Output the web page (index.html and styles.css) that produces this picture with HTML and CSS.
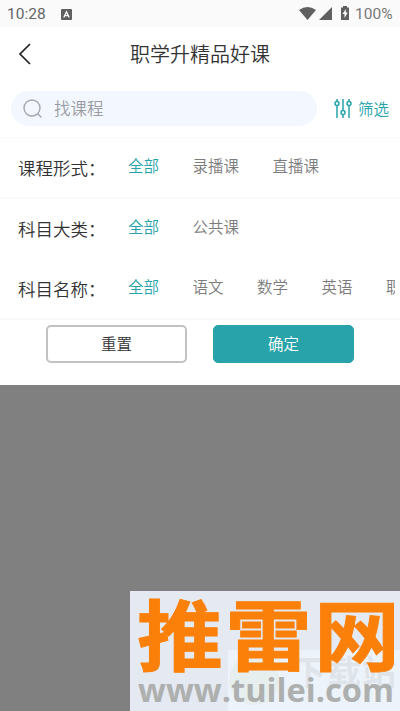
FILE: index.html
```html
<!DOCTYPE html>
<html lang="zh-CN">
<head>
<meta charset="utf-8">
<title>职学升精品好课</title>
<link rel="stylesheet" href="styles.css">
</head>
<body>
<div class="screen">
  <div class="status">
    <span class="time">10:28</span>
    <svg class="ime" width="11" height="11" viewBox="0 0 11 11"><rect width="11" height="11" rx="1" fill="#606060"/><path d="M2.8 8.5 5.5 2.7 8.2 8.5M3.9 6.6h3.2" fill="none" stroke="#fff" stroke-width="1.3"/></svg>
    <svg class="signals" width="51" height="16" viewBox="0 0 51 16"><path d="M0 4Q8.500-2 17 4L8.500 14Z" fill="#606060"/><path d="M20 14 33 1V14Z" fill="#606060"/><path d="M44 1.500V0h4v1.500h2v12.500h-8V1.500Z" fill="#606060"/><path d="M46.800 3 43.500 8h2v4l3.200-5.500h-2Z" fill="#fff"/></svg>
    <span class="battery">100%</span>
  </div>
  <header class="header">
    <svg class="back" width="14" height="22" viewBox="0 0 14 22"><path d="M12 1 2 11 12 21" fill="none" stroke="#222" stroke-width="1.7"/></svg>
    <h1 class="title">职学升精品好课</h1>
  </header>
  <div class="searchbar">
    <div class="search">
      <svg width="20" height="20" viewBox="0 0 20 20" fill="none" stroke="#a5a8ae" stroke-width="1.4"><circle cx="9" cy="9" r="8"/><path d="m14.500 14.500 4 4"/></svg>
      <span class="caption">找课程</span>
    </div>
    <div class="filter">
      <svg width="18" height="19" viewBox="0 0 18 19" fill="none" stroke="#27a3a9" stroke-width="1.5"><path d="M3 0v2.500M3 6.500V19M9 0v11.500M9 15.500V19M15 0v2.500M15 6.500V19"/><circle cx="3" cy="4.500" r="2"/><circle cx="9" cy="13.500" r="2"/><circle cx="15" cy="4.500" r="2"/></svg>
      <span class="caption">筛选</span>
    </div>
  </div>
  <div class="row lined">
    <span class="label">课程形式：</span>
    <div class="options"><span class="active">全部</span><span>录播课</span><span>直播课</span></div>
  </div>
  <div class="row">
    <span class="label">科目大类：</span>
    <div class="options"><span class="active">全部</span><span>公共课</span></div>
  </div>
  <div class="row lined">
    <span class="label">科目名称：</span>
    <div class="options"><span class="active">全部</span><span>语文</span><span>数学</span><span>英语</span><span>职</span></div>
  </div>
  <div class="actions">
    <div class="button reset">重置</div>
    <div class="button confirm">确定</div>
  </div>
  <div class="mask">
    <svg class="watermark" width="270" height="120" viewBox="0 0 270 120">
      <rect width="270" height="120" fill="#e5e9f1"/>
      <rect x="98" y="59" width="172" height="61" fill="#edf3fa"/>
      <circle cx="124" cy="89" r="25" fill="#e7eeee"/>
      <text class="site" x="162" y="94" textLength="104">下载站</text>
      <text class="brand" transform="translate(7 74) scale(1 .9)" textLength="263">推雷网</text>
      <text class="url" x="8" y="111" textLength="256" lengthAdjust="spacingAndGlyphs">www.tuilei.com</text>
    </svg>
  </div>
</div>
</body>
</html>
```
FILE: styles.css
```css
* { box-sizing: border-box; }
body {
  margin: 0;
  font-family: "Noto Sans CJK SC", sans-serif;
  font-weight: 350;
  color: #333;
}
.screen {
  width: 400px;
  height: 711px;
  display: flex;
  flex-direction: column;
  overflow: hidden;
  background: #fff;
}
.screen svg { display: block; flex: none; }
.status {
  height: 27px;
  flex: none;
  display: flex;
  align-items: center;
  padding: 1px 7px 0;
  background: #fafafa;
  font: 15.5px/27px Roboto, sans-serif;
  color: #666;
}
.time { width: 54px; }
.signals { margin-left: auto; margin-right: 5px; }
.battery { width: 38px; color: #777; }
.header {
  height: 53px;
  flex: none;
  display: flex;
  align-items: center;
  padding-left: 18px;
}
.title {
  margin: 0 0 0 98px;
  font-size: 20px;
  line-height: 28px;
  font-weight: 350;
}
.searchbar {
  height: 58px;
  flex: none;
  display: flex;
  align-items: center;
  padding: 0 11px;
  border-bottom: 1px solid #fafafa;
}
.search {
  width: 306px;
  height: 35px;
  border-radius: 18px;
  background: #f3f7ff;
  display: flex;
  align-items: center;
  gap: 11px;
  padding-left: 12px;
  font-size: 16.5px;
  color: #999ca2;
}
.caption { padding-bottom: 1px; }
.filter {
  display: flex;
  align-items: center;
  gap: 6px;
  margin-left: 17px;
  font-size: 15.5px;
  color: #27a3a9;
}
.row {
  height: 60px;
  flex: none;
  display: flex;
  align-items: center;
  padding: 0 5px 0 18px;
}
.lined { height: 61px; border-bottom: 2px solid #f9f9f9; }
.label {
  width: 110px;
  flex: none;
  font-size: 17.5px;
  line-height: 24px;
  white-space: nowrap;
}
.options {
  flex: 1;
  display: flex;
  gap: 33.5px;
  overflow: hidden;
  white-space: nowrap;
  font-size: 15.5px;
  line-height: 22px;
  padding-bottom: 6px;
  color: #7c7c7c;
}
.options span { flex: none; }
.options .active { color: #27a3a9; }
.actions {
  height: 65px;
  flex: none;
  display: flex;
  gap: 26px;
  padding: 5px 46px 0;
}
.button {
  width: 141px;
  height: 38px;
  border-radius: 5px;
  font-size: 15.5px;
  line-height: 32px;
  text-align: center;
}
.reset { border: 2px solid #c2c2c2; }
.confirm { border: 1px solid #27a3a9; line-height: 34px; background: #27a3a9; color: #fff; }
.mask {
  flex: 1;
  display: flex;
  justify-content: flex-end;
  align-items: flex-end;
  background: #808080;
}
.brand { font-size: 86px; font-weight: 700; fill: #fa800a; stroke: #fa800a; stroke-width: 1; }
.url { font: 700 32px "Open Sans", sans-serif; fill: #adb0af; }
.site { font-size: 34px; font-weight: 700; fill: #dfe4eb; }
```
